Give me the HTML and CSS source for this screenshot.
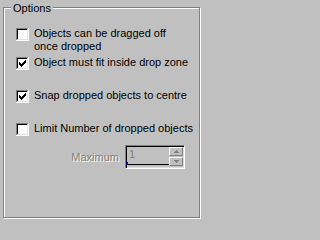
FILE: index.html
```html
<!DOCTYPE html>
<html>
<head>
<meta charset="utf-8">
<link rel="stylesheet" href="styles.css">
</head>
<body>
<div class="group">
  <div class="legend">Options</div>
  <div class="rows">
    <div class="row r1">
      <svg class="cb" width="13" height="13" viewBox="0 0 13 13" shape-rendering="crispEdges">
        <rect x="0" y="0" width="13" height="13" fill="#fff"/>
        <rect x="0" y="0" width="12" height="1" fill="#808080"/><rect x="0" y="0" width="1" height="12" fill="#808080"/>
        <rect x="1" y="1" width="10" height="1" fill="#000"/><rect x="1" y="1" width="1" height="10" fill="#000"/>
        <rect x="1" y="11" width="11" height="1" fill="#dfdfdf"/><rect x="11" y="1" width="1" height="11" fill="#dfdfdf"/>
      </svg>
      <span class="txt">Objects can be dragged off<br>once dropped</span>
    </div>
    <div class="row r2">
      <svg class="cb" width="13" height="13" viewBox="0 0 13 13" shape-rendering="crispEdges">
        <rect x="0" y="0" width="13" height="13" fill="#fff"/>
        <rect x="0" y="0" width="12" height="1" fill="#808080"/><rect x="0" y="0" width="1" height="12" fill="#808080"/>
        <rect x="1" y="1" width="10" height="1" fill="#000"/><rect x="1" y="1" width="1" height="10" fill="#000"/>
        <rect x="1" y="11" width="11" height="1" fill="#dfdfdf"/><rect x="11" y="1" width="1" height="11" fill="#dfdfdf"/>
        <path d="M3 5h1v3h-1zM4 6h1v3h-1zM5 7h1v3h-1zM6 6h1v3h-1zM7 5h1v3h-1zM8 4h1v3h-1zM9 3h1v3h-1z" fill="#000"/>
      </svg>
      <span class="txt">Object must fit inside drop zone</span>
    </div>
    <div class="row r3">
      <svg class="cb" width="13" height="13" viewBox="0 0 13 13" shape-rendering="crispEdges">
        <rect x="0" y="0" width="13" height="13" fill="#fff"/>
        <rect x="0" y="0" width="12" height="1" fill="#808080"/><rect x="0" y="0" width="1" height="12" fill="#808080"/>
        <rect x="1" y="1" width="10" height="1" fill="#000"/><rect x="1" y="1" width="1" height="10" fill="#000"/>
        <rect x="1" y="11" width="11" height="1" fill="#dfdfdf"/><rect x="11" y="1" width="1" height="11" fill="#dfdfdf"/>
        <path d="M3 5h1v3h-1zM4 6h1v3h-1zM5 7h1v3h-1zM6 6h1v3h-1zM7 5h1v3h-1zM8 4h1v3h-1zM9 3h1v3h-1z" fill="#000"/>
      </svg>
      <span class="txt">Snap dropped objects to centre</span>
    </div>
    <div class="row r4">
      <svg class="cb" width="13" height="13" viewBox="0 0 13 13" shape-rendering="crispEdges">
        <rect x="0" y="0" width="13" height="13" fill="#fff"/>
        <rect x="0" y="0" width="12" height="1" fill="#808080"/><rect x="0" y="0" width="1" height="12" fill="#808080"/>
        <rect x="1" y="1" width="10" height="1" fill="#000"/><rect x="1" y="1" width="1" height="10" fill="#000"/>
        <rect x="1" y="11" width="11" height="1" fill="#dfdfdf"/><rect x="11" y="1" width="1" height="11" fill="#dfdfdf"/>
      </svg>
      <span class="txt">Limit Number of dropped objects</span>
    </div>
  </div>
  <div class="maxrow">
    <span class="dis">Maximum</span>
    <div class="spin">
      <div class="field">1</div>
      <div class="btns">
        <div class="btn">
          <svg width="5" height="3" viewBox="0 0 5 3" shape-rendering="crispEdges"><path d="M2 0h1v1h1v1h1v1h-5v-1h1v-1h1z" fill="#808080"/></svg>
        </div>
        <div class="btn">
          <svg width="5" height="3" viewBox="0 0 5 3" shape-rendering="crispEdges"><path d="M0 0h5v1h-1v1h-1v1h-1v-1h-1v-1h-1z" fill="#808080"/></svg>
        </div>
      </div>
    </div>
  </div>
</div>
</body>
</html>
```
FILE: styles.css
```css
html, body {
  margin: 0;
  padding: 0;
}
body {
  width: 204px;
  height: 222px;
  background: #c0c0c0;
  font-family: "Liberation Sans", Arial, sans-serif;
  font-size: 11px;
  line-height: 13px;
  color: #000;
  overflow: hidden;
}
.group {
  position: relative;
  box-sizing: border-box;
  margin: 7px 0 0 3px;
  width: 197px;
  height: 211px;
  border: 1px solid #808080;
  box-shadow: inset 1px 1px 0 #fff, 1px 1px 0 #fff;
  padding: 19px 0 0 12px;
}
.legend {
  position: absolute;
  top: -6px;
  left: 7px;
  padding: 0 2px;
  background: #c0c0c0;
  line-height: 13px;
}
.rows {
  display: flex;
  flex-direction: column;
}
.row {
  display: flex;
  align-items: flex-start;
  gap: 5px;
}
.cb {
  flex: none;
  display: block;
  margin-top: 1px;
}
.r2 { margin-top: 3px; }
.r3 { margin-top: 19px; }
.r4 { margin-top: 19px; }
.txt {
  white-space: nowrap;
}
.maxrow {
  margin-top: 9px;
  display: flex;
  justify-content: flex-end;
  align-items: center;
  gap: 6px;
  padding-right: 14px;
}
.dis {
  color: #808080;
  text-shadow: 1px 1px 0 #fff;
}
.spin {
  box-sizing: border-box;
  width: 60px;
  height: 24px;
  border: 1px solid;
  border-color: #808080 #fff #fff #808080;
  box-shadow: inset 1px 1px 0 #000, inset -1px -1px 0 #dfdfdf;
  padding: 1px;
  display: flex;
}
.field {
  position: relative;
  flex: 1;
  box-sizing: border-box;
  height: 18px;
  border-bottom: 1px solid #000;
  padding: 1px 0 0 2px;
  color: #808080;
}
.field::before {
  content: "";
  position: absolute;
  left: -1px;
  bottom: -1px;
  width: 2px;
  height: 3px;
  background: #000080;
}
.btns {
  width: 14px;
  display: flex;
  flex-direction: column;
  gap: 1px;
}
.btn {
  box-sizing: border-box;
  height: 9px;
  background: #c0c0c0;
  border: 1px solid;
  border-color: #fff #808080 #808080 #fff;
  display: flex;
  align-items: center;
  justify-content: center;
}
.btn svg {
  display: block;
}
```
